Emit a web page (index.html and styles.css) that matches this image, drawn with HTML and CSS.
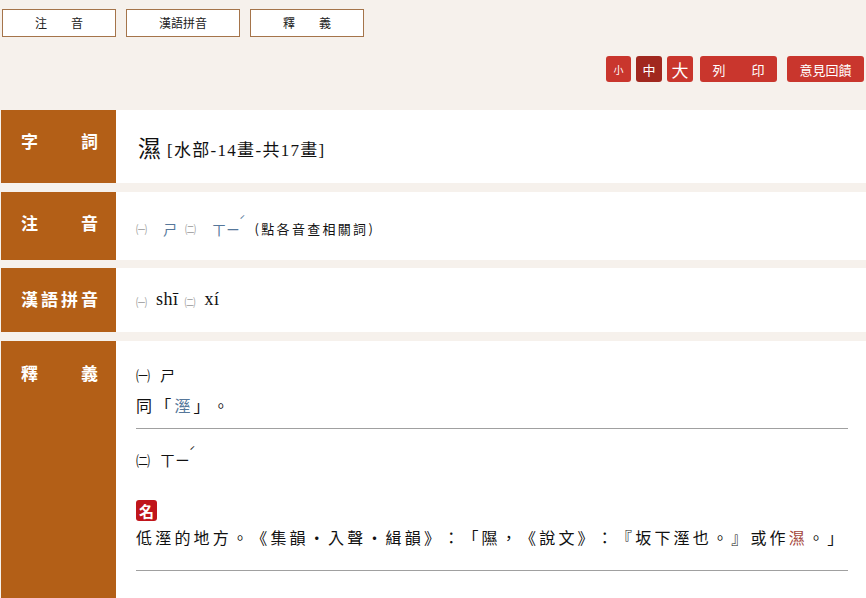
FILE: index.html
```html
<!DOCTYPE html>
<html lang="zh-Hant">
<head>
<meta charset="utf-8">
<title>濕</title>
<link rel="stylesheet" href="styles.css">
</head>
<body>
<nav class="tabs">
  <a class="tab">注　　音</a>
  <a class="tab">漢語拼音</a>
  <a class="tab">釋　　義</a>
</nav>
<div class="tools">
  <a class="tbtn sz s-small">小</a>
  <a class="tbtn sz s-mid active">中</a>
  <a class="tbtn sz s-big">大</a>
  <a class="tbtn wide">列　　印</a>
  <a class="tbtn wide fb">意見回饋</a>
</div>
<main class="rows">
  <section class="row row-word">
    <div class="label">字　　詞</div>
    <div class="content center">
      <span class="word">濕</span><span class="radical">[水部-14畫-共17畫]</span>
    </div>
  </section>
  <section class="row row-zy">
    <div class="label">注　　音</div>
    <div class="content center">
      <span class="num">㈠</span><span class="zy link z1">ㄕ</span><span class="num n2">㈡</span><span class="zy link z2">ㄒㄧ<span class="tone">ˊ</span></span><span class="hint">(點各音查相關詞)</span>
    </div>
  </section>
  <section class="row row-py">
    <div class="label">漢語拼音</div>
    <div class="content center">
      <span class="num">㈠</span><span class="py">shī</span><span class="num">㈡</span><span class="py">xí</span>
    </div>
  </section>
  <section class="row row-def">
    <div class="label">釋　　義</div>
    <div class="content defs">
      <div class="def first">
        <div class="line"><span class="dnum">㈠</span>ㄕ</div>
        <div class="line spaced">同「<span class="ref">溼</span>」。</div>
      </div>
      <div class="def second">
        <div class="line"><span class="dnum">㈡</span>ㄒㄧ<span class="tone dark">ˊ</span></div>
        <div class="pos"><span class="badge">名</span></div>
        <div class="line spaced">低溼的地方。《集韻‧入聲‧緝韻》：「隰，《說文》：『坂下溼也。』或作<span class="hl">濕</span>。」</div>
      </div>
    </div>
  </section>
</main>
</body>
</html>
```
FILE: styles.css
```css
* { box-sizing: border-box; }
html, body { margin: 0; padding: 0; }
body {
  background: #f6f1ec;
  font-family: "Liberation Serif", "Noto Sans CJK TC", serif;
  color: #111;
  width: 866px;
  height: 598px;
  overflow: hidden;
  text-spacing-trim: space-all;
}
.tabs {
  display: flex;
  gap: 10px;
  padding: 9px 0 0 2px;
}
.tab {
  width: 114px;
  height: 28px;
  border: 1px solid #a5744a;
  background: #fff;
  font-family: "Noto Sans CJK TC", sans-serif;
  font-size: 12px;
  line-height: 26px;
  text-align: center;
  color: #222;
}
.tools {
  display: flex;
  justify-content: flex-end;
  align-items: flex-start;
  padding: 19px 2px 0 0;
  height: 73px;
}
.tbtn {
  height: 26px;
  background: #c9362d;
  color: #fff;
  border-radius: 3px;
  font-family: "Noto Sans CJK TC", sans-serif;
  display: flex;
  align-items: center;
  justify-content: center;
}
.sz { width: 26px; margin-right: 5px; }
.s-small { font-size: 10px; width: 25px; }
.s-mid { font-size: 13px; }
.s-big { font-size: 17px; margin-right: 7px; }
.active { background: #a1281f; }
.wide { width: 77px; font-size: 13px; }
.fb { margin-left: 10px; }
.rows {
  display: flex;
  flex-direction: column;
  gap: 9px;
}
.row {
  display: flex;
  margin-left: 1px;
}
.row-word { height: 73px; }
.row-zy { height: 68px; margin-bottom: -1px; }
.row-py { height: 64px; }
.row-def { height: 260px; }
.label {
  width: 115px;
  flex: none;
  background: #b35f17;
  color: #fff;
  font-family: "Noto Sans CJK TC", sans-serif;
  font-weight: bold;
  font-size: 17px;
  letter-spacing: 3px;
  line-height: 20px;
  padding: 21px 0 0 20px;
  white-space: nowrap;
}
.row-def .label { padding-top: 22px; }
.content {
  flex: 1;
  min-width: 0;
  background: #fff;
  padding: 0 18px 0 20px;
}
.center {
  display: flex;
  align-items: center;
}
.word {
  font-family: "Noto Sans CJK TC", serif;
  font-size: 23px;
  margin: 0 6px 0 2px;
}
.radical {
  font-size: 17px;
  letter-spacing: 1.3px;
  padding-top: 3px;
}
.num {
  font-family: "Noto Sans CJK TC", sans-serif;
  font-size: 11px;
  color: #999;
  margin-right: 16px;
  padding-top: 5px;
}
.n2 { margin-right: 16px; }
.row-py .num { margin-right: 9px; padding-top: 3px; }
.zy {
  font-family: "Noto Sans CJK TC", sans-serif;
  font-size: 14px;
  padding-top: 5px;
}
.z1 { margin-right: 8px; }
.z2 { margin-right: 9px; }
.link { color: #56779a; }
.tone {
  font-size: 11px;
  line-height: 0;
  vertical-align: 10px;
  margin-left: -1px;
}
.hint {
  font-family: "Noto Sans CJK TC", sans-serif;
  font-size: 13px;
  letter-spacing: 2.3px;
  padding-top: 4px;
}
.py {
  font-size: 18px;
  margin-right: 6px;
  padding-bottom: 2px;
  letter-spacing: 0.5px;
}
.defs {
  padding-top: 19px;
  padding-right: 18px;
}
.def { border-bottom: 1px solid #a0a0a0; }
.first { padding-bottom: 8px; }
.second { padding-top: 16px; padding-bottom: 18px; }
.line {
  font-family: "Noto Sans CJK TC", serif;
  font-size: 15px;
  line-height: 30px;
  white-space: nowrap;
}
.dnum { font-size: 14px; margin-right: 10px; }
.spaced {
  font-size: 16px;
  letter-spacing: 3.2px;
}
.ref { color: #56779a; }
.hl { color: #a3443a; }
.tone.dark { color: #111; }
.pos {
  margin-top: 25px;
  height: 22px;
}
.badge {
  display: inline-block;
  width: 21px;
  height: 21px;
  background: #c0151b;
  color: #fff;
  border-radius: 3px;
  font-family: "Noto Sans CJK TC", sans-serif;
  font-weight: bold;
  font-size: 15px;
  line-height: 21px;
  text-align: center;
  vertical-align: top;
}
```
